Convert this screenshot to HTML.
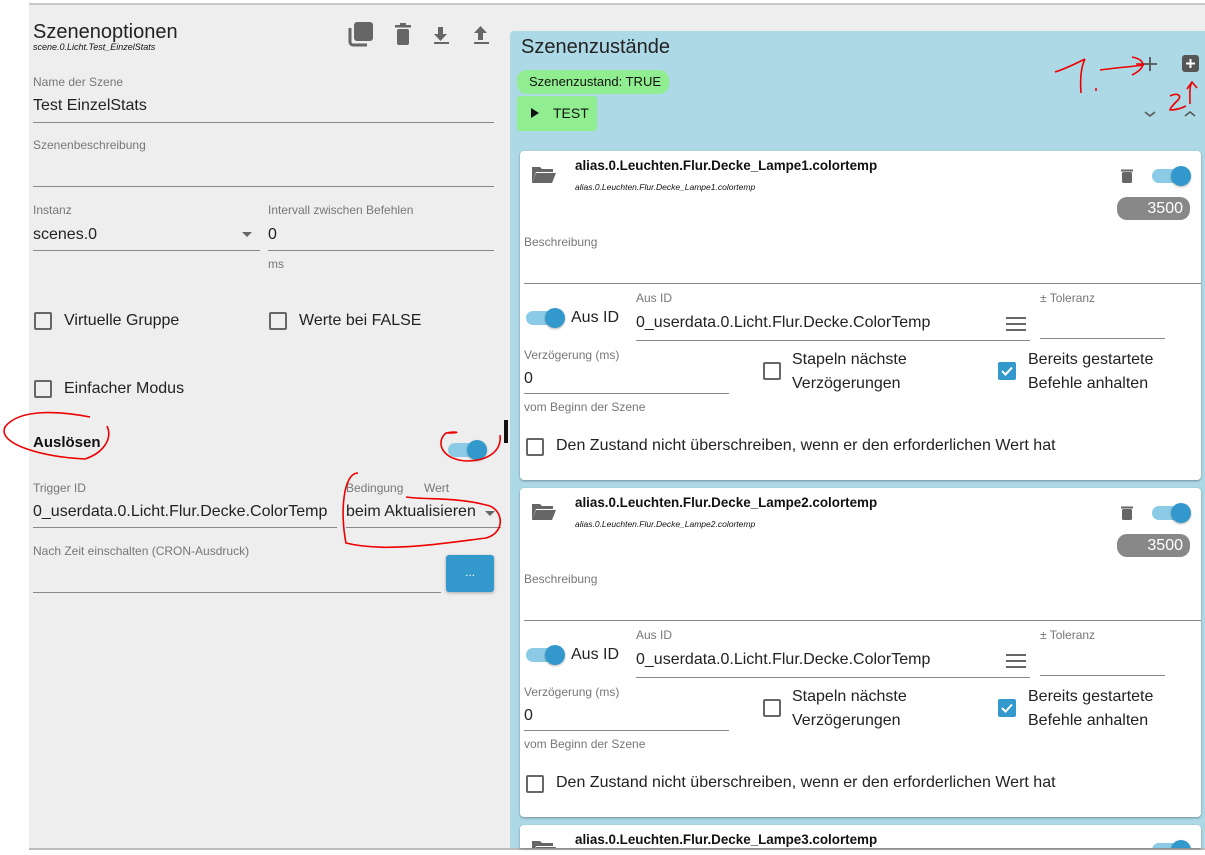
<!DOCTYPE html>
<html><head><meta charset="utf-8"><style>
*{margin:0;padding:0;box-sizing:border-box}
body{width:1205px;height:855px;background:#fff;position:relative;overflow:hidden;font-family:"Liberation Sans",sans-serif;color:#111}
.a{position:absolute;white-space:nowrap;line-height:1}
.lbl{font-size:12px;color:#777}
.v{font-size:16px;color:#222}
.ln{position:absolute;height:1px;background:#888}
.cb{position:absolute;width:18px;height:18px;border:2px solid #666;border-radius:2px}
.card{position:absolute;left:520px;width:681px;height:329px;background:#fff;border-radius:4px;box-shadow:0 1px 2px rgba(0,0,0,.35)}
.sw{position:absolute;width:36px;height:14px;border-radius:7px;background:#8ccbe6}
.sw::after{content:"";position:absolute;right:-3px;top:-3px;width:20px;height:20px;border-radius:50%;background:#3399cc;box-shadow:0 1px 2px rgba(0,0,0,.3)}
.ct{font-size:13.4px;font-weight:bold}
</style></head><body>
<div style="position:absolute;left:29px;top:3px;width:1176px;height:845px;background:#eee;border-top:2px solid #c8c8c8"></div>
<div style="position:absolute;left:29px;top:848px;width:1176px;height:2px;background:#bbb"></div>

<!-- left panel -->
<div class="a" style="left:33px;top:22px;font-size:20px;color:#222">Szenenoptionen</div>
<div class="a" style="left:33px;top:43px;font-size:9px;font-style:italic">scene.0.Licht.Test_EinzelStats</div>
<svg class="a" style="left:348px;top:21px" width="150" height="26" viewBox="0 0 150 26">
<rect x="6" y="1" width="19" height="19" rx="3" fill="#666"/><path d="M2 7v14a3 3 0 0 0 3 3h14" stroke="#666" stroke-width="3" fill="none"/>
<rect x="49" y="8" width="12" height="16" rx="2" fill="#666"/><rect x="47" y="4" width="16" height="2.5" fill="#666"/><rect x="52" y="2" width="6" height="3" fill="#666"/>
<path d="M90 6h5v7h4l-6.5 7-6.5-7h4z" fill="#666"/><rect x="86" y="21" width="15" height="2" fill="#666"/>
<path d="M130 19h5v-7h4l-6.5-7-6.5 7h4z" fill="#666"/><rect x="126" y="21" width="15" height="2" fill="#666"/>
</svg>
<div class="a lbl" style="left:33px;top:76px">Name der Szene</div>
<div class="a v" style="left:33px;top:98px">Test EinzelStats</div>
<div class="ln" style="left:33px;top:122px;width:461px"></div>
<div class="a lbl" style="left:33px;top:139px">Szenenbeschreibung</div>
<div class="ln" style="left:33px;top:186px;width:461px"></div>
<div class="a lbl" style="left:33px;top:204px">Instanz</div>
<div class="a v" style="left:33px;top:227px">scenes.0</div>
<div class="a" style="left:242px;top:232px;border:5px solid transparent;border-top-color:#666;border-bottom:0"></div>
<div class="ln" style="left:33px;top:250px;width:227px"></div>
<div class="a lbl" style="left:268px;top:204px">Intervall zwischen Befehlen</div>
<div class="a v" style="left:268px;top:227px">0</div>
<div class="ln" style="left:268px;top:250px;width:226px"></div>
<div class="a lbl" style="left:268px;top:258px">ms</div>
<div class="cb" style="left:34px;top:312px"></div><div class="a v" style="left:64px;top:313px">Virtuelle Gruppe</div>
<div class="cb" style="left:269px;top:312px"></div><div class="a v" style="left:299px;top:313px">Werte bei FALSE</div>
<div class="cb" style="left:34px;top:380px"></div><div class="a v" style="left:64px;top:381px">Einfacher Modus</div>
<div class="a" style="left:33px;top:435px;font-size:15px;font-weight:bold">Auslösen</div>
<div class="sw" style="left:448px;top:443px"></div>
<div class="a" style="left:504px;top:420px;width:4px;height:23px;background:#111"></div>
<div class="a lbl" style="left:33px;top:482px">Trigger ID</div>
<div class="a v" style="left:33px;top:504px">0_userdata.0.Licht.Flur.Decke.ColorTemp</div>
<div class="ln" style="left:33px;top:527px;width:304px"></div>
<div class="a lbl" style="left:346px;top:482px">Bedingung</div>
<div class="a lbl" style="left:424px;top:482px">Wert</div>
<div class="a v" style="left:346px;top:504px">beim Aktualisieren</div>
<div class="a" style="left:485px;top:511px;border:5px solid transparent;border-top-color:#666;border-bottom:0"></div>
<div class="ln" style="left:346px;top:527px;width:155px"></div>
<div class="a lbl" style="left:33px;top:545px">Nach Zeit einschalten (CRON-Ausdruck)</div>
<div class="ln" style="left:33px;top:592px;width:408px"></div>
<div class="a" style="left:446px;top:555px;width:48px;height:37px;background:#3399cc;border-radius:3px;box-shadow:0 1px 3px rgba(0,0,0,.3);color:#fff;font-size:12px;text-align:center;line-height:34px">...</div>

<!-- right panel -->
<div style="position:absolute;left:510px;top:31px;width:695px;height:817px;background:#add8e6;border-radius:4px 0 0 0"></div>
<div class="a" style="left:521px;top:37px;font-size:20px;color:#222">Szenenzustände</div>
<div class="a" style="left:517px;top:70px;height:24px;background:#90ee90;border-radius:10px;font-size:13px;line-height:24px;padding:0 8px 0 12px">Szenenzustand: TRUE</div>
<div class="a" style="left:517px;top:96px;width:80px;height:35px;background:#90ee90;border-radius:3px;font-size:14px;line-height:35px;padding-left:36px">TEST</div>
<div class="a" style="left:531px;top:108px;border:5px solid transparent;border-left:8px solid #111;border-right:0"></div>
<svg class="a" style="left:1140px;top:52px" width="62" height="72" viewBox="0 0 62 72">
<path d="M10 5v14M3 12h14" stroke="#555" stroke-width="1.8"/>
<rect x="42" y="3" width="17" height="17" rx="3" fill="#555"/><path d="M50.5 7v9M46 11.5h9" stroke="#fff" stroke-width="2"/>
<path d="M5 60l5 4 5-4" stroke="#555" stroke-width="1.5" fill="none"/><path d="M45 64l5-4 5 4" stroke="#555" stroke-width="1.5" fill="none"/>
</svg>
<svg class="a" style="left:0;top:0" width="1205" height="855">
<g stroke="#e00" stroke-width="1.6" fill="none">
<path d="M1055 72c10-3 20-8 30-13M1085 59c-4 8-5 20-4 34M1096 88v3M1100 70c14-2 28-3 44-5M1132 57c10 2 12 6 10 10c-2 4-8 7-10 8M1136 64h7"/>
<path d="M1192 82c-3 5-2 14-2 22M1187 89l5-7 5 6M1170 96c8-4 12 0 8 4c-4 4-8 8-8 10c6 0 12-2 16-4"/>
<path d="M90 417c-25-5-70-10-85 10c-8 18 40 30 80 32c18-6 28-20 22-33"/>
<path d="M446 433c10-2 18 0 0 0c-10 8-6 26 20 28c22 0 36-10 34-26"/>
<path d="M358 473c-15 0-18 40-12 70c40 10 100 0 140-5c20-5 18-30 0-33c-30-8-60-5-80-8"/>
</g></svg>

<!-- cards -->
<div class="card" style="top:151px">
<svg class="a" style="left:11px;top:14px" width="25" height="20" viewBox="0 0 25 20"><path d="M1 2h8l2 2h11v3H5L1 18z" fill="#666"/><path d="M5 8h20l-4 10H1z" fill="#666"/></svg>
<div class="a ct" style="left:55px;top:8px">alias.0.Leuchten.Flur.Decke_Lampe1.colortemp</div>
<div class="a" style="left:55px;top:32px;font-size:8.5px;font-style:italic">alias.0.Leuchten.Flur.Decke_Lampe1.colortemp</div>
<svg class="a" style="left:600px;top:17px" width="14" height="16"><rect x="2" y="4" width="10" height="11" rx="1.5" fill="#666"/><rect x="1" y="1.5" width="12" height="2" fill="#666"/></svg>
<div class="sw" style="left:632px;top:18px"></div>
<div class="a" style="left:597px;top:46px;width:73px;height:23px;background:#888;border-radius:10px;color:#fff;font-size:16px;line-height:23px;text-align:right;padding-right:7px">3500</div>
<div class="a lbl" style="left:4px;top:85px">Beschreibung</div>
<div class="ln" style="left:4px;top:132px;width:677px"></div>
<div class="a lbl" style="left:116px;top:141px">Aus ID</div>
<div class="sw" style="left:6px;top:160px"></div>
<div class="a v" style="left:51px;top:159px">Aus ID</div>
<div class="a v" style="left:116px;top:164px">0_userdata.0.Licht.Flur.Decke.ColorTemp</div>
<svg class="a" style="left:486px;top:166px" width="20" height="14"><path d="M0 1h20M0 7h20M0 13h20" stroke="#666" stroke-width="2"/></svg>
<div class="ln" style="left:116px;top:189px;width:394px"></div>
<div class="a lbl" style="left:520px;top:141px">± Toleranz</div>
<div class="ln" style="left:520px;top:187px;width:125px"></div>
<div class="a lbl" style="left:4px;top:198px">Verzögerung (ms)</div>
<div class="a v" style="left:4px;top:220px">0</div>
<div class="ln" style="left:4px;top:242px;width:205px"></div>
<div class="a lbl" style="left:4px;top:250px">vom Beginn der Szene</div>
<div class="cb" style="left:243px;top:211px"></div>
<div class="a v" style="left:272px;top:197px;line-height:24px">Stapeln nächste<br>Verzögerungen</div>
<div class="a" style="left:478px;top:211px;width:18px;height:18px;background:#3399cc;border-radius:2px"><svg width="18" height="18"><path d="M4 9l3.5 3.5 6.5-7" stroke="#fff" stroke-width="2" fill="none"/></svg></div>
<div class="a v" style="left:508px;top:197px;line-height:24px">Bereits gestartete<br>Befehle anhalten</div>
<div class="cb" style="left:6px;top:287px"></div>
<div class="a v" style="left:36px;top:287px">Den Zustand nicht überschreiben, wenn er den erforderlichen Wert hat</div>
</div>

<div class="card" style="top:488px">
<svg class="a" style="left:11px;top:14px" width="25" height="20" viewBox="0 0 25 20"><path d="M1 2h8l2 2h11v3H5L1 18z" fill="#666"/><path d="M5 8h20l-4 10H1z" fill="#666"/></svg>
<div class="a ct" style="left:55px;top:8px">alias.0.Leuchten.Flur.Decke_Lampe2.colortemp</div>
<div class="a" style="left:55px;top:32px;font-size:8.5px;font-style:italic">alias.0.Leuchten.Flur.Decke_Lampe2.colortemp</div>
<svg class="a" style="left:600px;top:17px" width="14" height="16"><rect x="2" y="4" width="10" height="11" rx="1.5" fill="#666"/><rect x="1" y="1.5" width="12" height="2" fill="#666"/></svg>
<div class="sw" style="left:632px;top:18px"></div>
<div class="a" style="left:597px;top:46px;width:73px;height:23px;background:#888;border-radius:10px;color:#fff;font-size:16px;line-height:23px;text-align:right;padding-right:7px">3500</div>
<div class="a lbl" style="left:4px;top:85px">Beschreibung</div>
<div class="ln" style="left:4px;top:132px;width:677px"></div>
<div class="a lbl" style="left:116px;top:141px">Aus ID</div>
<div class="sw" style="left:6px;top:160px"></div>
<div class="a v" style="left:51px;top:159px">Aus ID</div>
<div class="a v" style="left:116px;top:164px">0_userdata.0.Licht.Flur.Decke.ColorTemp</div>
<svg class="a" style="left:486px;top:166px" width="20" height="14"><path d="M0 1h20M0 7h20M0 13h20" stroke="#666" stroke-width="2"/></svg>
<div class="ln" style="left:116px;top:189px;width:394px"></div>
<div class="a lbl" style="left:520px;top:141px">± Toleranz</div>
<div class="ln" style="left:520px;top:187px;width:125px"></div>
<div class="a lbl" style="left:4px;top:198px">Verzögerung (ms)</div>
<div class="a v" style="left:4px;top:220px">0</div>
<div class="ln" style="left:4px;top:242px;width:205px"></div>
<div class="a lbl" style="left:4px;top:250px">vom Beginn der Szene</div>
<div class="cb" style="left:243px;top:211px"></div>
<div class="a v" style="left:272px;top:197px;line-height:24px">Stapeln nächste<br>Verzögerungen</div>
<div class="a" style="left:478px;top:211px;width:18px;height:18px;background:#3399cc;border-radius:2px"><svg width="18" height="18"><path d="M4 9l3.5 3.5 6.5-7" stroke="#fff" stroke-width="2" fill="none"/></svg></div>
<div class="a v" style="left:508px;top:197px;line-height:24px">Bereits gestartete<br>Befehle anhalten</div>
<div class="cb" style="left:6px;top:287px"></div>
<div class="a v" style="left:36px;top:287px">Den Zustand nicht überschreiben, wenn er den erforderlichen Wert hat</div>
</div>

<div class="card" style="top:825px;height:23px;overflow:hidden;border-radius:4px 4px 0 0">
<svg class="a" style="left:11px;top:14px" width="25" height="20" viewBox="0 0 25 20"><path d="M1 2h8l2 2h11v3H5L1 18z" fill="#666"/><path d="M5 8h20l-4 10H1z" fill="#666"/></svg>
<div class="a ct" style="left:55px;top:8px">alias.0.Leuchten.Flur.Decke_Lampe3.colortemp</div>
<div class="sw" style="left:632px;top:18px"></div>
</div>
</body></html>
